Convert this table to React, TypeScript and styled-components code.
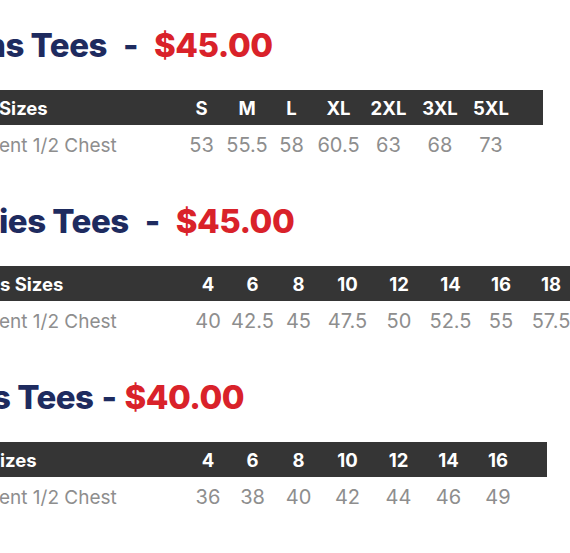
import React from "react";
import styled, { createGlobalStyle } from "styled-components";

const Global = createGlobalStyle`
  html, body { margin: 0; padding: 0; background: #ffffff; overflow: hidden; }
  body { font-family: Inter, "Liberation Sans", sans-serif; }
`;

const Page = styled.div`
  display: flex;
  flex-direction: column;
  gap: 36px;
  padding-top: 25px;
  width: 570px;
  overflow: hidden;
`;

const Section = styled.section`
  display: flex;
  flex-direction: column;
`;

const Title = styled.h2<{ $shift: number }>`
  margin: 0 0 25px ${(p) => p.$shift}px;
  font-family: Inter, "Liberation Sans", sans-serif;
  font-weight: 800;
  font-size: 33px;
  line-height: 40px;
  white-space: nowrap;
  letter-spacing: -0.5px;
`;

const Name = styled.span`
  color: #1e2b5f;
`;

const Dash = styled.span<{ $space: number }>`
  color: #1e2b5f;
  margin: 0 ${(p) => p.$space}px;
`;

const Price = styled.span`
  color: #d9222a;
`;

const Row = styled.div<{ $cols: string; $width?: number }>`
  display: grid;
  grid-template-columns: ${(p) => p.$cols};
  align-items: center;
  width: ${(p) => (p.$width ? `${p.$width}px` : "600px")};
  white-space: nowrap;
`;

const HeadRow = styled(Row)`
  height: 35px;
  background: #353535;
  color: #ffffff;
  font-weight: 700;
  font-size: 18.5px;
`;

const DataRow = styled(Row)`
  height: 40px;
  color: #8e8e8e;
  font-weight: 400;
  font-size: 20px;
`;

const Label = styled.div<{ $shift: number; $size?: number }>`
  margin-left: ${(p) => p.$shift}px;
  text-align: left;
  ${(p) => (p.$size ? `font-size: ${p.$size}px;` : "")}
`;

const Cell = styled.div`
  text-align: center;
`;

type Table = {
  name: string;
  price: string;
  nameShift: number;
  dashSpace: number;
  sizeLabel: string;
  sizeShift: number;
  labelCol: number;
  widths: number[];
  barWidth?: number;
  sizes: string[];
  chest: string[];
};

const tables: Table[] = [
  {
    name: "ns Tees",
    price: "$45.00",
    nameShift: -15,
    dashSpace: 16,
    sizeLabel: "Sizes",
    sizeShift: -1,
    labelCol: 178,
    widths: [47, 44, 45, 49, 51, 52, 50],
    barWidth: 543,
    sizes: ["S", "M", "L", "XL", "2XL", "3XL", "5XL"],
    chest: ["53", "55.5", "58", "60.5", "63", "68", "73"],
  },
  {
    name: "ies Tees",
    price: "$45.00",
    nameShift: -1,
    dashSpace: 16,
    sizeLabel: "s Sizes",
    sizeShift: 0,
    labelCol: 186,
    widths: [44, 45, 47, 51, 52, 51, 50, 50],
    sizes: ["4", "6", "8", "10", "12", "14", "16", "18"],
    chest: ["40", "42.5", "45", "47.5", "50", "52.5", "55", "57.5"],
  },
  {
    name: "s Tees",
    price: "$40.00",
    nameShift: -8,
    dashSpace: 8,
    sizeLabel: "izes",
    sizeShift: 0,
    labelCol: 186,
    widths: [44, 45, 47, 51, 51, 49, 50],
    barWidth: 547,
    sizes: ["4", "6", "8", "10", "12", "14", "16"],
    chest: ["36", "38", "40", "42", "44", "46", "49"],
  },
];

export default function App() {
  return (
    <>
      <Global />
      <Page>
        {tables.map((t, i) => {
          const cols = [t.labelCol, ...t.widths].map((w) => `${w}px`).join(" ") + " 1fr";
          return (
            <Section key={i}>
              <Title $shift={t.nameShift}>
                <Name>{t.name}</Name>
                <Dash $space={t.dashSpace}>-</Dash>
                <Price>{t.price}</Price>
              </Title>
              <HeadRow $cols={cols} $width={t.barWidth}>
                <Label $shift={t.sizeShift}>{t.sizeLabel}</Label>
                {t.sizes.map((s) => (
                  <Cell key={s}>{s}</Cell>
                ))}
              </HeadRow>
              <DataRow $cols={cols} $width={t.barWidth}>
                <Label $shift={-1} $size={19}>
                  ent 1/2 Chest
                </Label>
                {t.chest.map((c, j) => (
                  <Cell key={j}>{c}</Cell>
                ))}
              </DataRow>
            </Section>
          );
        })}
      </Page>
    </>
  );
}
